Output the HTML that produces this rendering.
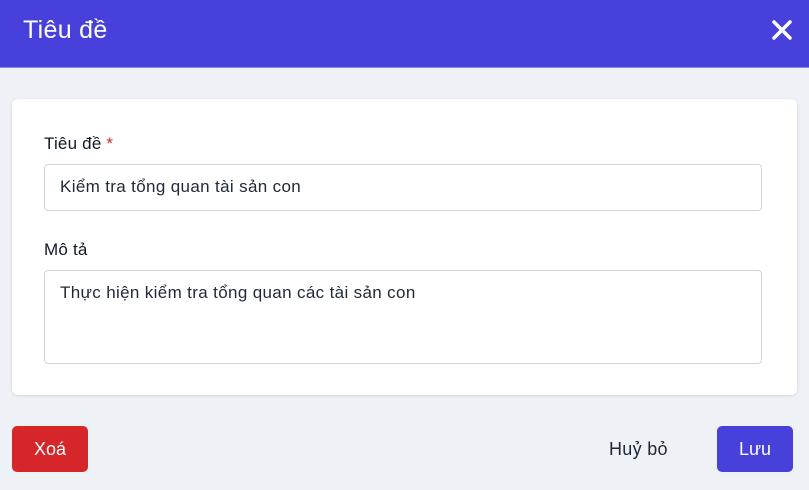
<!DOCTYPE html>
<html><head><meta charset="utf-8"><style>
*{box-sizing:border-box;margin:0;padding:0}
body{width:809px;height:490px;background:#eef1f6;font-family:"Liberation Sans",sans-serif;position:relative;overflow:hidden;color:#1f2937}
.hd{position:absolute;left:0;top:0;width:809px;height:68px;background:#4740db;border-bottom:1px solid #8e89e8}
.hd .t{position:absolute;left:23px;top:16px;color:#fff;font-size:25px;letter-spacing:.3px}
.card{position:absolute;left:12px;top:99px;width:785px;height:296px;background:#fff;border-radius:6px;box-shadow:0 1px 3px rgba(0,0,0,.12)}
.lbl{position:absolute;left:44px;font-size:17px;color:#111827;letter-spacing:.2px}
.in{position:absolute;left:44px;width:718px;border:1.5px solid #d1d5db;border-radius:4px;background:#fff;font-size:17px;padding-left:15px;color:#1f2937;letter-spacing:.35px}
.btn{position:absolute;top:426px;height:46px;width:76px;border-radius:5px;color:#fff;font-size:18px;text-align:center;line-height:46px}
</style></head><body>
<div class="hd"><div class="t">Tiêu đề</div>
<svg style="position:absolute;left:771px;top:19px" width="22" height="22" viewBox="0 0 22 22"><path d="M3 3L19 19M19 3L3 19" stroke="#fff" stroke-width="3.5" stroke-linecap="round"/></svg></div>
<div class="card"></div>
<div class="lbl" style="top:134px">Tiêu đề <span style="color:#dc2626">*</span></div>
<div class="in" style="top:164px;height:47px;line-height:44px">Kiểm tra tổng quan tài sản con</div>
<div class="lbl" style="top:240px">Mô tả</div>
<div class="in" style="top:270px;height:94px;padding-top:11px;line-height:22px">Thực hiện kiểm tra tổng quan các tài sản con</div>
<div class="btn" style="left:12px;background:#d72629">Xoá</div>
<div style="position:absolute;left:609px;top:439px;font-size:18px;color:#1f2937;letter-spacing:.3px">Huỷ bỏ</div>
<div class="btn" style="left:717px;background:#4740db">Lưu</div>
</body></html>
